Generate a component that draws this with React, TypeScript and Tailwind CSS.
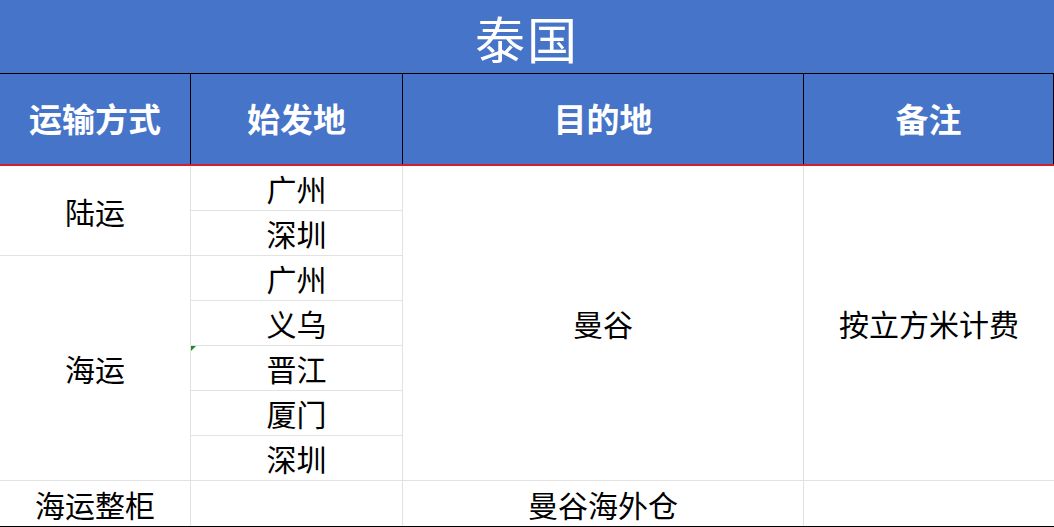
import React from 'react'

const cjk = { fontFamily: '"Noto Sans CJK SC", "Noto Sans", sans-serif' }

const cities = ['广州', '深圳', '广州', '义乌', '晋江', '厦门', '深圳']

export default function App() {
  return (
    <div className="w-[1054px] h-[527px] bg-white text-black overflow-hidden" style={cjk}>
      {/* Title */}
      <div className="h-[74px] bg-[#4674c9] border-b border-black flex items-center justify-center">
        <span className="text-[50px] leading-none text-white tracking-[2px]">泰国</span>
      </div>

      {/* Header */}
      <div className="grid grid-cols-[190px_212px_401px_251px] h-[92px] bg-[#4674c9] border-b-2 border-[#d3202e] text-white text-[33px] font-bold">
        <div className="flex items-center justify-center">运输方式</div>
        <div className="flex items-center justify-center border-l border-black">始发地</div>
        <div className="flex items-center justify-center border-l border-black">目的地</div>
        <div className="flex items-center justify-center border-l border-r border-black">备注</div>
      </div>

      {/* Body */}
      <div className="grid grid-cols-[190px_212px_401px_251px] grid-rows-[repeat(8,45px)] border-b border-black text-[30px] leading-none">
        <div className="col-start-1 row-start-1 row-span-2 flex items-center justify-center border-b border-[#e2e2e2]">陆运</div>
        <div className="col-start-1 row-start-3 row-span-5 flex items-center justify-center border-b border-[#e2e2e2]">海运</div>
        <div className="col-start-1 row-start-8 flex items-center justify-center">海运整柜</div>

        {cities.map((c, i) => (
          <div
            key={i}
            className="col-start-2 relative flex items-center justify-center border-l border-b border-[#e2e2e2]"
            style={{ gridRowStart: i + 1 }}
          >
            {c}
            {i === 4 && (
              <span className="absolute left-0 top-0 w-0 h-0 border-t-[5px] border-r-[5px] border-t-[#1a8a2a] border-r-transparent" />
            )}
          </div>
        ))}
        <div className="col-start-2 row-start-8 border-l border-[#e2e2e2]" />

        <div className="col-start-3 row-start-1 row-span-7 flex items-center justify-center border-l border-b border-[#e2e2e2]">曼谷</div>
        <div className="col-start-3 row-start-8 flex items-center justify-center border-l border-[#e2e2e2]">曼谷海外仓</div>

        <div className="col-start-4 row-start-1 row-span-7 flex items-center justify-center border-l border-b border-[#e2e2e2]">按立方米计费</div>
        <div className="col-start-4 row-start-8 border-l border-[#e2e2e2]" />
      </div>
    </div>
  )
}
